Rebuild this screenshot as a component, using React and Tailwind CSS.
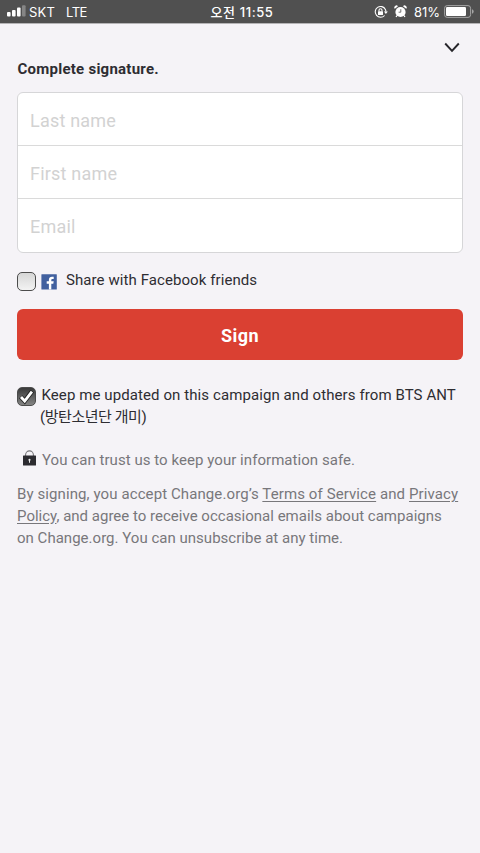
import React, { useState } from "react";

const fields = [
  { name: "lastName", type: "text", label: "Last name" },
  { name: "firstName", type: "text", label: "First name" },
  { name: "email", type: "email", label: "Email" },
];

function StatusBar() {
  return (
    <div className="grid h-[23px] grid-cols-[1fr_auto_1fr] items-center bg-[#505050] pl-[7px] pr-[6px] font-['Inter','Noto_Sans_CJK_KR',sans-serif] text-[13px] leading-[20px] text-white shadow-[0_1px_0_#b5b4b6]">
      <div className="flex items-center pt-[1px]">
        <svg className="relative -top-[1px]" width="19" height="12" viewBox="0 0 19 12" fill="#fff">
          <rect x="0" y="7" width="3.6" height="4.4" rx="1" />
          <rect x="5" y="5" width="3.6" height="6.4" rx="1" />
          <rect x="10" y="2.6" width="3.6" height="8.8" rx="1" />
          <rect x="15" y="0.3" width="3.6" height="11.1" rx="1" fill="#858585" />
        </svg>
        <span className="ml-[3px] tracking-[0.2px]">SKT</span>
        <span className="ml-[11px] tracking-[-0.5px]">LTE</span>
      </div>
      <div className="pl-[3px] pt-[1px] font-medium tracking-[0.6px]">오전 11:55</div>
      <div className="flex items-center justify-end">
        <svg width="14" height="14" viewBox="0 0 14 14" fill="none" stroke="#fff" strokeWidth="1.1">
          <path d="M11.4 4.4A5.4 5.4 0 1 0 10.6 10.5M11.4 4.4a5.4 5.4 0 0 1 .5 2.4" />
          <path d="M9.9 6.4h3.9L11.9 9z" fill="#fff" stroke="none" />
          <rect x="4" y="6.2" width="5" height="3.8" rx="0.5" fill="#fff" stroke="none" />
          <path d="M5 6.4V5.2a1.5 1.5 0 0 1 3 0v1.2" />
        </svg>
        <svg className="ml-[6px]" width="13" height="13" viewBox="0 0 13 13" fill="#fff">
          <circle cx="6.5" cy="7" r="5.1" />
          <path d="M0.8 3.8A2 2 0 0 1 4 1.2zM12.2 3.8A2 2 0 0 0 9 1.2z" />
          <path d="M2.9 10.5l-.8 1.5M10.1 10.5l.8 1.5" stroke="#fff" strokeWidth="1.3" />
          <path d="M6.8 4.2v3H4.6" fill="none" stroke="#505050" strokeWidth="0.8" />
        </svg>
        <span className="ml-[7px] pt-[1px] tracking-[0px]">81%</span>
        <svg className="ml-[4px]" width="30" height="13" viewBox="0 0 30 13">
          <rect x="0.6" y="0.6" width="26" height="11.8" rx="2.6" fill="none" stroke="#a5a5a5" />
          <rect x="2" y="2" width="20" height="9" rx="1.2" fill="#fff" />
          <path d="M28 4.3a2.3 2.3 0 0 1 0 4.4z" fill="#a5a5a5" />
        </svg>
      </div>
    </div>
  );
}

function Checkbox({ checked, onChange }) {
  return (
    <button
      type="button"
      role="checkbox"
      aria-checked={checked}
      onClick={onChange}
      className={`flex h-[19px] w-[19px] shrink-0 items-center justify-center rounded-[5px] border border-[#4c4c4c] bg-linear-to-b ${
        checked ? "from-[#3a3a3a] to-[#858585]" : "from-[#d6d6d6] to-[#f3f3f3]"
      }`}
    >
      {checked && (
        <svg className="shrink-0" width="17" height="17" viewBox="0 0 17 17" fill="none">
          <path d="M2.7 8.7l4 4.3 7.5-9.8" stroke="#222" strokeWidth="4.6" />
          <path d="M3 9l3.7 4 7.2-9.4" stroke="#fff" strokeWidth="2.8" />
        </svg>
      )}
    </button>
  );
}

export default function App() {
  const [share, setShare] = useState(false);
  const [updates, setUpdates] = useState(true);

  return (
    <div className="min-h-screen bg-[#f5f3f7] font-['Roboto','Noto_Sans_CJK_KR',sans-serif] text-[15px] text-[#2e2d32]">
      <StatusBar />
      <div className="px-[17px]">
        <div className="flex h-[36px] justify-end pr-[3px] pt-[19px]">
          <svg width="16" height="11" viewBox="0 0 16 11" fill="none" stroke="#26252a" strokeWidth="1.9">
            <path d="M1.2 1.5l6.8 7.3 6.8-7.3" />
          </svg>
        </div>

        <h1 className="h-[33px] pl-[0.5px] text-[15px] font-bold leading-[20px] tracking-[0.25px]">
          Complete signature.
        </h1>

        <div className="h-[161px] divide-y divide-[#dadada] overflow-hidden rounded-[6px] border border-[#d6d6d8] bg-white">
          {fields.map((f) => (
            <input
              key={f.name}
              type={f.type}
              name={f.name}
              placeholder={f.label}
              className="block h-[53px] w-full px-[12px] pt-[2px] text-[18px] tracking-[0.2px] outline-none placeholder:text-[#d2d2d2]"
            />
          ))}
        </div>

        <div className="mt-[19px] flex h-[19px] items-center">
          <Checkbox checked={share} onChange={() => setShare(!share)} />
          <svg className="ml-[5px]" width="16" height="16" viewBox="0 0 16 16">
            <rect x="0.4" y="0.2" width="15.4" height="15.4" rx="0.5" fill="#41609f" />
            <path d="M7.9 15.6V9.7H5.7V7.3h2.2V5.8c0-2 1.2-3.1 3.1-3.1h1.7V5h-1.2c-.9 0-1.2.4-1.2 1.1v1.2h2.4L12.3 9.7h-2v5.9z" fill="#fff" />
          </svg>
          <span className="relative -top-[1px] ml-[9px] tracking-[0.08px]">Share with Facebook friends</span>
        </div>

        <button
          type="button"
          className="mt-[18px] block h-[51px] w-full rounded-[6px] bg-[#da4032] pt-[2px] text-[18px] font-bold tracking-[0.5px] text-white"
        >
          Sign
        </button>

        <div className="mt-[24px] flex h-[44px] items-start">
          <div className="pt-[3px]">
            <Checkbox checked={updates} onChange={() => setUpdates(!updates)} />
          </div>
          <div className="ml-[5px] whitespace-nowrap leading-[22px]">
            <p className="pl-[0.5px] tracking-[0.09px]">Keep me updated on this campaign and others from BTS ANT</p>
            <p className="-ml-[1px] tracking-[-0.45px]">(방탄소년단 개미)</p>
          </div>
        </div>

        <div className="mt-[21px] flex h-[22px] items-center pl-[6px] leading-[22px] text-[#78777b]">
          <svg className="relative -top-[2px]" width="13" height="16" viewBox="0 0 13 16">
            <path d="M2.6 6V4.8a3.9 3.9 0 0 1 7.8 0V6" fill="none" stroke="#77767a" strokeWidth="1.1" />
            <rect y="5.6" width="13" height="9.8" rx="0.5" fill="#2c2b30" />
            <path d="M6.5 8.7a1.2 1.2 0 0 1 .5 2.2v1.8H6v-1.8a1.2 1.2 0 0 1 .5-2.2z" fill="#eee" />
          </svg>
          <span className="ml-[6px] tracking-[0.05px]">You can trust us to keep your information safe.</span>
        </div>

        <p className="mt-[12px] whitespace-nowrap leading-[22px] text-[#78777b]">
          <span className="block tracking-[0.1px]">
            By signing, you accept Change.org’s <u className="underline-offset-2">Terms of Service</u> and{" "}
            <u className="underline-offset-2">Privacy</u>
          </span>
          <span className="block tracking-[0.01px]">
            <u className="underline-offset-2">Policy</u>, and agree to receive occasional emails about campaigns
          </span>
          <span className="block tracking-[0.02px]">on Change.org. You can unsubscribe at any time.</span>
        </p>
      </div>
    </div>
  );
}
